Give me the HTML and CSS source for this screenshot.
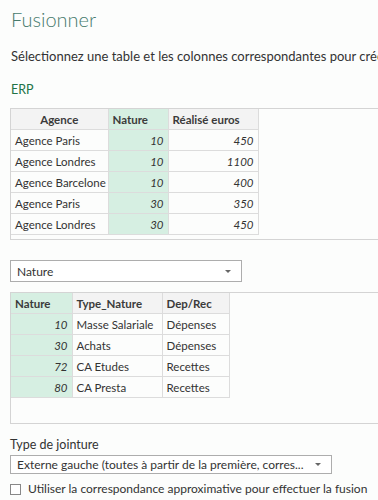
FILE: index.html
```html
<!DOCTYPE html>
<html lang="fr">
<head>
    <meta charset="UTF-8">
    <title>Fusionner</title>
    <link rel="stylesheet" href="styles.css">
</head>
<body>
    <div class="wrapper">
        <h1 class="title">Fusionner</h1>
        <p class="intro">Sélectionnez une table et les colonnes correspondantes pour créer une table fusionnée.</p>

        <div class="source-name">ERP</div>
        <div class="preview preview-top">
            <table class="grid grid-top">
                <colgroup>
                    <col class="col-agence">
                    <col class="col-nature">
                    <col class="col-euros">
                </colgroup>
                <tr>
                    <th class="center">Agence</th>
                    <th class="sel">Nature</th>
                    <th>Réalisé euros</th>
                </tr>
                <tr><td>Agence Paris</td><td class="sel num">10</td><td class="num">450</td></tr>
                <tr><td>Agence Londres</td><td class="sel num">10</td><td class="num">1100</td></tr>
                <tr><td>Agence Barcelone</td><td class="sel num">10</td><td class="num">400</td></tr>
                <tr><td>Agence Paris</td><td class="sel num">30</td><td class="num">350</td></tr>
                <tr><td>Agence Londres</td><td class="sel num">30</td><td class="num">450</td></tr>
            </table>
        </div>

        <div class="select select-table">
            <span>Nature</span>
            <span class="arrow"></span>
        </div>

        <div class="preview preview-bottom">
            <table class="grid grid-bottom">
                <colgroup>
                    <col class="col-nat2">
                    <col class="col-type">
                    <col class="col-dep">
                </colgroup>
                <tr>
                    <th class="sel">Nature</th>
                    <th>Type_Nature</th>
                    <th>Dep/Rec</th>
                </tr>
                <tr><td class="sel num">10</td><td>Masse Salariale</td><td>Dépenses</td></tr>
                <tr><td class="sel num">30</td><td>Achats</td><td>Dépenses</td></tr>
                <tr><td class="sel num">72</td><td>CA Etudes</td><td>Recettes</td></tr>
                <tr><td class="sel num">80</td><td>CA Presta</td><td>Recettes</td></tr>
            </table>
        </div>

        <div class="join-label">Type de jointure</div>
        <div class="select select-join">
            <span>Externe gauche (toutes à partir de la première, corres...</span>
            <span class="arrow"></span>
        </div>
        <label class="check-row"><span class="check"></span>Utiliser la correspondance approximative pour effectuer la fusion</label>
    </div>
</body>
</html>
```

FILE: styles.css
```css
html, body{
    margin: 0;
    padding: 0;
    background: #fcfdfc;
    overflow: hidden;
}
.wrapper{
    padding-left: 10px;
    font-family: Lato, "Noto Sans", sans-serif;
    font-size: 12px;
    color: #333;
    white-space: nowrap;
}
.title{
    margin: 0;
    padding-top: 5px;
    padding-left: 1px;
    height: 30px;
    font-size: 20px;
    font-weight: 300;
    color: #467a6c;
    line-height: 28px;
}
.intro{
    margin: 0;
    padding-top: 11px;
    padding-left: 1px;
    font-size: 13px;
    line-height: 20px;
    height: 24px;
}
.source-name{
    margin-top: 11px;
    padding-left: 1px;
    font-size: 12.5px;
    line-height: 18px;
    color: #217346;
    height: 20px;
}
.preview{
    width: 600px;
    border: 1px solid #d4d4d4;
    border-right: none;
    overflow: hidden;
}
.preview-top{
    margin-top: 7px;
    height: 130px;
}
.preview-bottom{
    margin-top: 10px;
    height: 130px;
}
.grid{
    border-collapse: collapse;
    table-layout: fixed;
    font-size: 11.5px;
}
.grid-top{ width: 247px; }
.grid-bottom{ width: 218px; }
.grid th, .grid td{
    height: 20px;
    padding: 0 4px;
    border-right: 1px solid #dcdcdc;
    border-bottom: 1px solid #dcdcdc;
    line-height: 19px;
    text-align: left;
    overflow: hidden;
}
.grid th{
    background: #f3f3f3;
    font-weight: bold;
    color: #3b3b3b;
}
.grid .sel{
    background: #d6efe2;
}
.grid .num{
    text-align: right;
    font-style: italic;
}
.grid .center{
    text-align: center;
}
.col-agence{ width: 97px; }
.col-nature{ width: 60px; }
.col-euros{ width: 90px; }
.col-nat2{ width: 61px; }
.col-type{ width: 90px; }
.col-dep{ width: 67px; }

.select{
    display: flex;
    align-items: center;
    justify-content: space-between;
    border: 1px solid #adadad;
    box-sizing: border-box;
    padding: 0 10px 0 6px;
    background: #fff;
}
.select-table{
    margin-top: 20px;
    width: 232px;
    height: 22px;
    font-size: 12px;
}
.select-join{
    margin-top: 1px;
    width: 322px;
    height: 19px;
}
.arrow{
    flex-shrink: 0;
    width: 0;
    height: 0;
    border-left: 3px solid transparent;
    border-right: 3px solid transparent;
    border-top: 3px solid #666;
}
.join-label{
    margin-top: 12px;
    line-height: 18px;
    height: 18px;
    font-size: 12.5px;
}
.check-row{
    display: flex;
    align-items: center;
    margin-top: 7px;
    gap: 7px;
    line-height: 16px;
}
.check{
    flex-shrink: 0;
    width: 11px;
    height: 11px;
    border: 1px solid #888;
    box-sizing: border-box;
    background: #fff;
}
```
